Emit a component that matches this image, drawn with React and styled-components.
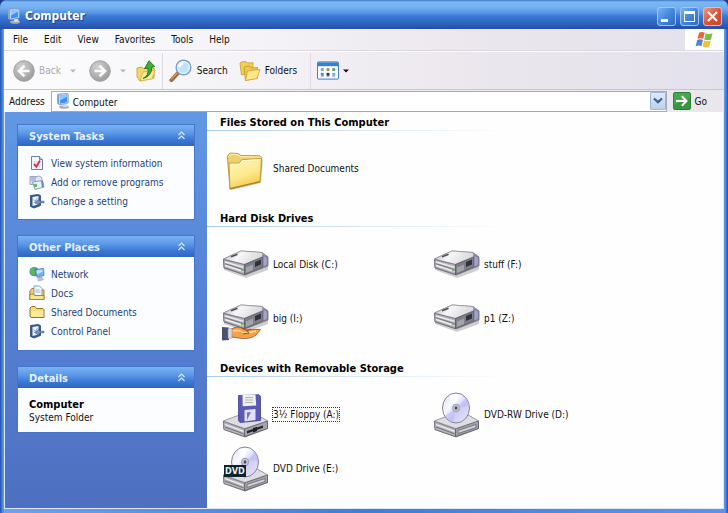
import React from "react";
import styled, { createGlobalStyle } from "styled-components";

const Global = createGlobalStyle`
  * { box-sizing: border-box; }
  body {
    margin: 0;
    background: #1d3c94;
    color: #111;
    font: 10px/13px "DejaVu Sans Condensed", "DejaVu Sans", sans-serif;
  }
  button, input { font: inherit; color: inherit; }
  h1, h2, h3, p, ul { margin: 0; padding: 0; }
`;

const Window = styled.div`
  display: flex;
  flex-direction: column;
  min-height: 100vh;
  padding: 0 4px 4px;
  border-radius: 7px 7px 0 0;
  background: linear-gradient(90deg, #2450ae 0, #3f7ddb 2px, #6ea2ec 4px, #3f7ddb 50%, #5c94e8 calc(100% - 3px), #2450ae 100%);
  overflow: hidden;
`;

const TitleBar = styled.header`
  display: flex;
  align-items: center;
  gap: 3px;
  height: 29px;
  margin: 0 -4px;
  padding: 3px 6px 0;
  background: linear-gradient(#3f78c8 0, #7db8f3 2px, #73aef0 8px, #5593e4 13px, #3b7bd6 16px, #3169c6 22px, #2850ab 28px);
`;

const Title = styled.h1`
  flex: 1;
  color: #fff;
  font: bold 12px/16px "DejaVu Sans Condensed", "DejaVu Sans", sans-serif;
  text-shadow: 1px 1px 1px #1c3f8a;
`;

const Captions = styled.div`
  display: flex;
  gap: 4px;
`;

const Caption = styled.button`
  display: flex;
  width: 19px;
  height: 19px;
  padding: 0;
  border: 1px solid ${(p) => (p.$close ? "#e9b9b8" : "#9cc6f5")};
  border-radius: 3px;
  background: ${(p) =>
    p.$close
      ? "linear-gradient(135deg, #ec9a80, #dc5638 50%, #c8432b)"
      : "linear-gradient(135deg, #79b2f0, #4587de 50%, #2f68c4)"};
`;

const MenuRow = styled.div`
  display: flex;
  height: 22px;
  background: linear-gradient(90deg, #fdfdfe, #f3f1f5 40%, #ebe7ed 65%, #e3e1ec);
  border-bottom: 1px solid #dad7df;
`;

const Menu = styled.nav`
  display: flex;
  flex: 1;
  padding-left: 1px;
`;

const MenuButton = styled.button`
  padding: 0 8px;
  border: 0;
  background: none;
`;

const FlagBox = styled.div`
  display: flex;
  justify-content: center;
  align-items: center;
  width: 39px;
  background: #fff;
`;

const Toolbar = styled.div`
  display: flex;
  align-items: center;
  height: 39px;
  padding-left: 9px;
  background: linear-gradient(90deg, #fcfcfd, #f3f1f5 40%, #ebe7ed 65%, #e3e1ec);
  border-top: 1px solid #fff;
  border-bottom: 1px solid #c9c5cd;
`;

const Tool = styled.button`
  display: flex;
  align-items: center;
  gap: 4px;
  height: 32px;
  padding: 0;
  margin-right: ${(p) => p.$after || 0}px;
  border: 0;
  background: none;
  color: ${(p) => (p.disabled ? "#a9a9ad" : "#111")};
`;

const Separator = styled.div`
  width: 1px;
  height: 36px;
  margin-right: 6px;
  background: #dcd9e0;
`;

const AddressBar = styled.div`
  display: flex;
  align-items: center;
  height: 22px;
  padding: 0 17px 0 5px;
  background: linear-gradient(90deg, #fcfcfd, #f3f1f5 40%, #e9e6ec);
`;

const AddressField = styled.div`
  display: flex;
  align-items: center;
  flex: 1;
  height: 21px;
  margin: 0 6px;
  padding: 0 0 0 3px;
  border: 1px solid #a5a9b5;
  background: #fff;
`;

const AddressInput = styled.input`
  flex: 1;
  min-width: 0;
  padding: 2px 0 0 2px;
  border: 0;
  outline: 0;
  background: none;
`;

const DropButton = styled.button`
  display: flex;
  align-items: center;
  justify-content: center;
  width: 16px;
  height: 18px;
  padding: 0;
  border: 1px solid #9fb8d8;
  border-radius: 1px;
  background: linear-gradient(#dfeafa, #b9d1f0);
`;

const Body = styled.div`
  display: flex;
  flex: 1;
  border: 1px solid #dbe8fb;
  border-width: 0 1px 1px;
  background: #fefefe;
`;

const Sidebar = styled.aside`
  display: flex;
  flex-direction: column;
  gap: 15px;
  width: 202px;
  padding: 12px 12px 13px;
  background: linear-gradient(#6198e4, #5580d4 50%, #4f6fc0);
`;

const Panel = styled.section`
  border: 1px solid #4475cc;
  background: #fcfdfe;
`;

const PanelHead = styled.div`
  display: flex;
  align-items: center;
  justify-content: space-between;
  height: 21px;
  padding: 2px 8px 0 11px;
  background: linear-gradient(#7bb3f2 0, #5b98e8 8px, #3d7bd7 14px, #2f66c2);
`;

const PanelTitle = styled.h2`
  color: #e6f0ff;
  font-size: 11px;
  line-height: 13px;
`;

const CollapseButton = styled.button`
  display: flex;
  padding: 0 0 2px;
  border: 0;
  background: none;
`;

const Links = styled.ul`
  display: grid;
  gap: 3px;
  padding: 9px 11px ${(p) => p.$bottom}px;
  list-style: none;
`;

const TaskLink = styled.a`
  display: flex;
  align-items: center;
  gap: 6px;
  height: 16px;
  color: #1f3f7d;
  text-decoration: none;
`;

const Details = styled.div`
  padding: 10px 11px 8px;
  line-height: 13px;
`;

const DetailsName = styled.p`
  color: #000;
  font-size: 11px;
  font-weight: bold;
`;

const Content = styled.main`
  display: flex;
  flex-direction: column;
  gap: 20px;
  flex: 1;
  min-width: 0;
  padding-top: 4px;
`;

const GroupTitle = styled.h3`
  padding: 0 0 1px 13px;
  color: #000;
  font-size: 11px;
  line-height: 13px;
`;

const Rule = styled.div`
  width: 300px;
  max-width: 100%;
  height: 1px;
  background: linear-gradient(90deg, #a9cdec, #d8e8f5 50%, #fefefe);
`;

const Items = styled.div`
  display: grid;
  grid-template-columns: repeat(auto-fill, 211px);
  row-gap: 6px;
  padding: 13px 0 0 15px;
`;

const Item = styled.button`
  display: flex;
  align-items: center;
  gap: 3px;
  height: 48px;
  padding: 0;
  border: 0;
  background: none;
  text-align: left;
`;

const ItemLabel = styled.span`
  outline: ${(p) => (p.$focused ? "1px dotted #333" : "0")};
`;

/* ---------- icons ---------- */

const MonitorIcon = () => (
  <svg width="16" height="16" viewBox="0 0 16 16">
    <ellipse cx="9" cy="14" rx="5" ry="1.8" fill="#a9adb8" />
    <path d="M8 11l4 0 1 2.4-5 .6z" fill="#d9dbe2" />
    <path d="M2 1.5L4 1v11l-2-1.4z" fill="#9ba6bd" />
    <path d="M3.5 1L12 .5q1.300 0 1.300 1.200V10L5 11.800q-1.500-.4-1.500-1.800z" fill="#b9d7fb" stroke="#6f91cb" strokeWidth=".7" />
    <path d="M5 2.200l7-.5v7.500l-7 1.200z" fill="#3f8ff0" />
    <path d="M5 2.200l7-.5v2L5 7.500z" fill="#8fc6fd" />
  </svg>
);

const NavCircle = ({ back }) => (
  <svg width="22" height="22" viewBox="0 0 22 22">
    <defs>
      <radialGradient id={back ? "navb" : "navf"} cx=".38" cy=".3" r=".8">
        <stop offset="0" stopColor="#d2d2d2" />
        <stop offset="1" stopColor="#969696" />
      </radialGradient>
    </defs>
    <circle cx="11" cy="11" r="10.300" fill={`url(#${back ? "navb" : "navf"})`} stroke="#a2a2a4" />
    <path
      d={back ? "M16.500 11H6.500M11.500 5.700L6 11l5.500 5.300" : "M5.500 11h10M10.500 5.700L16 11l-5.500 5.300"}
      fill="none"
      stroke="#fafafa"
      strokeWidth="2.600"
    />
  </svg>
);

const Caret = ({ color = "#111" }) => (
  <svg width="6" height="4" viewBox="0 0 6 4">
    <path d="M0 .5h6L3 3.500z" fill={color} />
  </svg>
);

const UpIcon = () => (
  <svg width="20" height="22" viewBox="0 0 20 22">
    <path d="M1 8l5-1 1.500 1.500L18 8v10L4 21 1 17z" fill="#f4d867" stroke="#c79a2e" strokeWidth=".8" />
    <path d="M4 21l3-9 12-2-3 9z" fill="#fbeb93" stroke="#d0a83c" strokeWidth=".7" />
    <path d="M7 18.500q6-2.500 5-10.500l-3.500.7L13 .8l5.800 5.700-3 .7Q16 16 7 18.500z" fill="#3fae35" stroke="#1d7422" strokeWidth=".9" />
  </svg>
);

const SearchIcon = () => (
  <svg width="24" height="24" viewBox="0 0 24 24">
    <path d="M8.500 14.500l-6 6.500" stroke="#94633f" strokeWidth="4" strokeLinecap="round" />
    <path d="M8 14.200L2.500 20" stroke="#d59a68" strokeWidth="1.500" strokeLinecap="round" />
    <circle cx="14.500" cy="8.500" r="7.300" fill="#cdeafd" stroke="#7ba1c8" strokeWidth="1.500" />
    <circle cx="14.500" cy="8.500" r="5.900" fill="#bfe3fc" stroke="#fff" strokeWidth=".8" />
    <path d="M10.500 8q.5-3.500 4-4" fill="none" stroke="#fff" strokeWidth="2" />
  </svg>
);

const FoldersIcon = () => (
  <svg width="22" height="22" viewBox="0 0 22 22">
    <path d="M1 3.500L2 2l5-.5L8.500 3 14 2.700V12L2.500 15z" fill="#f2cf57" stroke="#c69d35" strokeWidth=".8" />
    <path d="M5 8l1-1.500 5-.5L12.500 8l6-.5V18L6.500 20.500z" fill="#eec74d" stroke="#c1952d" strokeWidth=".8" />
    <path d="M6.500 20.500L8.500 11l12.500-1.500L18 18.500z" fill="#fce98c" stroke="#cda238" strokeWidth=".8" />
  </svg>
);

const ViewsIcon = () => (
  <svg width="22" height="19" viewBox="0 0 23 19">
    <rect x=".5" y=".5" width="22" height="18" rx="1" fill="#f8fbff" stroke="#3d78b8" />
    <path d="M1 1h21v4H1z" fill="#3482ce" />
    <path d="M4 7h3v3H4zM16 12h3v3h-3z" fill="#7aa7d7" />
    <path d="M10 7h3v3h-3z" fill="#a88f55" />
    <path d="M16 7h3v3h-3z" fill="#60a26b" />
    <path d="M4 12h3v3H4z" fill="#538bbb" />
    <path d="M10 12h3v3h-3z" fill="#282f67" />
    <path d="M4 16h3M10 16h3M16 16h3" stroke="#9ca8b6" />
  </svg>
);

const FlagIcon = () => (
  <svg width="19" height="18" viewBox="0 0 19 18">
    <path d="M4 1.800Q7 .2 9.700 1.800L8.200 8Q5.500 6.500 2.500 8z" fill="#e8683a" />
    <path d="M10.600 2.200q3 1.600 6.900.1L16 8.400q-3.700 1.500-6.800 0z" fill="#7fbd42" />
    <path d="M2.200 9Q5 7.500 8 9l-1.500 6.200Q4 13.600.6 15.200z" fill="#4c86d9" />
    <path d="M9 9.400q3 1.500 6.800 0l-1.500 6.200q-3.600 1.600-6.800 0z" fill="#f5bf35" />
  </svg>
);

const ChevronIcon = () => (
  <svg width="10" height="8" viewBox="0 0 10 8">
    <path d="M1 1.500l4 3.600 4-3.600" fill="none" stroke="#466087" strokeWidth="2.300" />
  </svg>
);

const GoIcon = () => (
  <svg width="18" height="18" viewBox="0 0 18 18">
    <rect x=".5" y=".5" width="17" height="17" rx="1.500" fill="#36953f" stroke="#2a8237" />
    <path d="M1 1h16v5L1 13z" fill="#58b259" opacity=".6" />
    <path d="M3 9h10M8.800 4.300L13.500 9l-4.700 4.700" fill="none" stroke="#fff" strokeWidth="2" />
  </svg>
);

const CollapseIcon = () => (
  <svg width="9" height="9" viewBox="0 0 9 9">
    <path d="M1.500 4l3-3 3 3M1.500 8l3-3 3 3" fill="none" stroke="#d9e9ff" strokeWidth="1.200" />
  </svg>
);

const InfoIcon = () => (
  <svg width="16" height="16" viewBox="0 0 16 16">
    <path d="M2.500 1.500h8l3 3v10h-11z" fill="#f4f7ff" stroke="#6d7fae" />
    <path d="M10.500 1.500v3h3" fill="#c4d0ec" stroke="#6d7fae" />
    <path d="M4.500 6h7v6.500h-7z" fill="#f7d7e0" />
    <path d="M5 9l2.300 2.800L11 5.500" fill="none" stroke="#cf3050" strokeWidth="1.800" />
  </svg>
);

const ProgramsIcon = () => (
  <svg width="16" height="16" viewBox="0 0 16 16">
    <path d="M1 2.500h9v8H1z" fill="#d7deed" stroke="#8494b8" strokeWidth=".8" />
    <path d="M2 4h4M2 6h4" stroke="#8a9cc7" />
    <circle cx="9.500" cy="5.500" r="3.500" fill="#dce8f7" stroke="#8da1c4" strokeWidth=".8" />
    <path d="M3.500 8l10-1.500 1.500 6.500-9 2.500z" fill="#e9eff8" stroke="#7589b2" strokeWidth=".8" />
    <path d="M12 7l1.800-.3L15 13l-2 .6z" fill="#7286bc" />
    <circle cx="6.500" cy="11.500" r="1.700" fill="#5db652" />
  </svg>
);

const SettingIcon = () => (
  <svg width="16" height="16" viewBox="0 0 16 16">
    <path d="M1.500 2.500l7.500-1 2.500 1v10L5 15l-3.500-1.500z" fill="#34598e" stroke="#2c4674" strokeWidth=".8" />
    <path d="M3.500 4l6-1v8.500l-6 1.500z" fill="#edf4ff" />
    <path d="M5.500 9.500l4-3 1.500 1.700h4v1.600h-4L9.500 12z" fill="#7492be" stroke="#3f5b87" strokeWidth=".6" />
    <path d="M4.500 6.500l1.500 2 2.500-3.500" stroke="#99b0d0" fill="none" />
  </svg>
);

const NetworkIcon = () => (
  <svg width="16" height="16" viewBox="0 0 17 16">
    <circle cx="5.500" cy="5.500" r="5" fill="#3f88d2" />
    <path d="M1 4q2-4 6-3L5.500 4l2 2L5 10Q1 9 1 4z" fill="#5fb84d" />
    <path d="M7 3.500L15.500 2l.5 7.500-7.500 2z" fill="#71b4f5" stroke="#5278b5" strokeWidth=".8" />
    <path d="M8 4.300l6.500-1.100v2.500L8.500 8.200z" fill="#c3e3ff" />
    <path d="M10.500 11.500l3-.8.5 2 1.500 1.300-5 1.300-1.300-.8z" fill="#bfc6d5" stroke="#7986a0" strokeWidth=".5" />
  </svg>
);

const DocsIcon = () => (
  <svg width="16" height="16" viewBox="0 0 16 16">
    <path d="M.8 6l2-2.500h3L7 5h8v9.500H.8z" fill="#f1cd5c" stroke="#9b7c35" strokeWidth=".9" />
    <path d="M5 1h5.500L13 3.500V11H5z" fill="#f2f8ff" stroke="#708bb8" strokeWidth=".8" />
    <path d="M6.500 5h4M6.500 7h5" stroke="#9ab5db" />
    <path d="M.8 14.500V9.500L4 9l1.500 1.500H15v4z" fill="#fae58d" stroke="#9b7c35" strokeWidth=".9" />
  </svg>
);

const FolderIcon = () => (
  <svg width="16" height="16" viewBox="0 0 16 16">
    <path d="M1 4l1.500-1.500H6L7.500 4.500H14l1 1v8H2L1 12z" fill="#f7da70" stroke="#8f7433" />
    <path d="M2 7h12.300v5.800H2.500z" fill="#fdea9a" />
  </svg>
);

const BigFolderIcon = () => (
  <svg width="48" height="48" viewBox="0 0 48 48">
    <defs>
      <linearGradient id="bigfolder" x1=".2" y1="0" x2=".6" y2="1">
        <stop offset="0" stopColor="#fff5b0" />
        <stop offset=".55" stopColor="#fdea8e" />
        <stop offset="1" stopColor="#f3c53f" />
      </linearGradient>
    </defs>
    <path d="M39.500 15l1.500 1-2 23L10 46l-2-1z" fill="#b9b4a4" opacity=".6" />
    <path d="M5.300 12L8 9l8.300.5 2.700 2 19 .2 1.800 1.800L38 38 8 45z" fill="#efd06a" stroke="#b99440" strokeWidth=".9" />
    <path d="M6.300 12.800L8.500 10.200l7.500.5 2.700 2 19.300.3" fill="none" stroke="#fff3b4" />
    <path d="M7 19.200h10l3-3.500 19.500-1.200L38 38 8 45z" fill="url(#bigfolder)" stroke="#bf9638" strokeWidth=".9" />
    <path d="M8 20.200h9.500l3-3.500 17.800-1.100" fill="none" stroke="#fffbd8" />
    <path d="M8 44.600l29.800-7" stroke="#a97e2a" strokeWidth="1.200" />
  </svg>
);

const DriveShape = ({ id }) => (
  <g>
    <defs>
      <linearGradient id={id} x1="0" y1="0" x2="1" y2=".3">
        <stop offset="0" stopColor="#b4b4ba" />
        <stop offset=".45" stopColor="#f6f6f8" />
        <stop offset="1" stopColor="#d9d9de" />
      </linearGradient>
    </defs>
    <path d="M2 25l20 9 24-8v4l-22 8L2 30z" fill="#77777f" opacity=".35" />
    <path d="M1.500 19L19 11l21 1.500 6 4.500v9L23 35 2 28z" fill="#a5a5ac" stroke="#76767e" strokeWidth=".8" />
    <path d="M1.500 19L19 11l21 1.500 1 4-19 8z" fill={`url(#${id})`} stroke="#8a8a90" strokeWidth=".6" />
    <path d="M1.500 19.500l21 5v10L2 27.500z" fill="#b3b3b9" stroke="#66666e" strokeWidth=".7" />
    <path d="M3 22l18.500 5.300M3 25.500l18.500 6" stroke="#eeeef1" strokeWidth="1.400" />
    <path d="M3 23.700l18.500 6" stroke="#66666e" strokeWidth=".8" />
    <path d="M22.500 24.500L41 17v10l-18.500 7.500z" fill="#7d7e87" stroke="#55555d" strokeWidth=".7" />
    <path d="M24 27.500l7-3V30l-7 3z" fill="#a2a3ab" />
    <path d="M33 22l6-2.500v5L33 27z" fill="#30303c" />
    <path d="M41 15.500l4 1q1.500 4.500 0 9l-4 1.500z" fill="#a3a3c8" stroke="#66668c" strokeWidth=".7" />
    <path d="M9 16.800l6.500-2.500" stroke="#4b4b53" strokeWidth="1.500" />
    <path d="M19 31l2.500-.5" stroke="#4fa256" />
  </g>
);

const HardDiskIcon = ({ id }) => (
  <svg width="48" height="48" viewBox="0 0 48 48">
    <DriveShape id={id} />
  </svg>
);

const SharedDriveIcon = ({ id }) => (
  <svg width="48" height="48" viewBox="0 0 48 48">
    <DriveShape id={id} />
    <path d="M9 35q5-3 10-1.500l6 2.500q5-1 13.500-.5l-4.500 5.500q-5 4-13.500 3.500L9 43z" fill="#f6a04a" stroke="#9a5423" strokeWidth=".8" />
    <path d="M11 37q6-1.500 10 1.500 7 1 13-1.500" fill="none" stroke="#ffd795" strokeWidth="1.500" />
    <path d="M19 34l6 2.500 4-1.500M21 40l6-1M25 36.500l2 3" fill="none" stroke="#a84c18" />
    <path d="M0 33l7 .5V46L0 46.500z" fill="#4d506e" />
    <path d="M6 34.500l4 .2v9.300l-4 .5z" fill="#d5d7e2" stroke="#888da6" strokeWidth=".5" />
  </svg>
);

const BaseShape = () => (
  <g>
    <path d="M1.500 31L15 26l20-1 10.500 6v7.500L23 47 2 39.500z" fill="#c5c5ca" stroke="#67676e" strokeWidth=".8" />
    <path d="M1.500 31L15 26l20-1 10.500 6L23 38.500z" fill="#dedee2" stroke="#97979d" strokeWidth=".6" />
    <path d="M1.500 31.500L22.500 39v7.500L2 39.500z" fill="#b5b5bb" stroke="#5c5c63" strokeWidth=".6" />
    <path d="M3 34.500l18.500 6.800" stroke="#f2f2f4" strokeWidth="1.300" />
    <path d="M3 37l18.500 6.800" stroke="#6a6a72" strokeWidth=".9" />
    <path d="M22.500 39l23-8v7.500l-23 8z" fill="#a3a3aa" stroke="#55555c" strokeWidth=".7" />
  </g>
);

const FloppyIcon = () => (
  <svg width="48" height="48" viewBox="0 0 48 48">
    <BaseShape />
    <path d="M25 41l16-5.500v2.200L25 43.400z" fill="#24242c" />
    <path d="M31 38l4-1v4l-4 1.500z" fill="#1c1c24" />
    <path d="M16.500 5.500l20.500-.8 1.500 1.800v24L18 32.500l-1.500-2z" fill="#5a5ab4" stroke="#3f3f8d" strokeWidth=".8" />
    <path d="M20.500 4.500h13l.7 11-13.500.8z" fill="#f0f0ee" />
    <path d="M23 7.500h8M23 10h8M23 12.500h8" stroke="#b3b3a9" />
    <path d="M22.500 20l11-1v11l-11 1.500z" fill="#dfe0f2" />
    <path d="M25 22.500l4-.5-4 8z" fill="#7171bd" />
  </svg>
);

const Disc = ({ cx, cy, id }) => (
  <g>
    <defs>
      <linearGradient id={id} x1="0" y1="0" x2="1" y2="1">
        <stop offset="0" stopColor="#dcdcee" />
        <stop offset=".35" stopColor="#f9f9ff" />
        <stop offset=".6" stopColor="#cfcdf6" />
        <stop offset="1" stopColor="#e9e9f8" />
      </linearGradient>
    </defs>
    <ellipse cx={cx} cy={cy} rx="13.500" ry="15" fill={`url(#${id})`} stroke="#77778b" strokeWidth=".9" />
    <path d={`M${cx} ${cy}l-11 8q4 6 8 6.500zM${cx} ${cy}l10-10q3 4 3.200 8z`} fill="#b9b5f3" opacity=".55" />
    <path d={`M${cx} ${cy}l-7-12q4-2.500 8-2z`} fill="#fff" opacity=".8" />
    <ellipse cx={cx} cy={cy} rx="3.500" ry="3.900" fill="#c9c9d8" stroke="#8c8c9e" strokeWidth=".8" />
    <ellipse cx={cx} cy={cy} rx="1.400" ry="1.700" fill="#4a4a55" />
  </g>
);

const DvdRwIcon = ({ id }) => (
  <svg width="48" height="48" viewBox="0 0 48 48">
    <BaseShape />
    <path d="M25 40.500l18-6v3l-18 6z" fill="#d2d2d8" stroke="#5c5c66" strokeWidth=".7" />
    <Disc cx={23} cy={18} id={id} />
  </svg>
);

const DvdLabel = styled.text`
  font: bold 9px "DejaVu Sans Condensed", sans-serif;
  fill: #e4f2f4;
`;

const DvdIcon = ({ id }) => (
  <svg width="48" height="48" viewBox="0 0 48 48">
    <BaseShape />
    <path d="M25 40.500l18-6v3l-18 6z" fill="#d2d2d8" stroke="#5c5c66" strokeWidth=".7" />
    <Disc cx={23} cy={18} id={id} />
    <rect x="2" y="21" width="22" height="12" fill="#10222b" />
    <DvdLabel x="3" y="30">DVD</DvdLabel>
  </svg>
);

/* ---------- page ---------- */

const menus = ["File", "Edit", "View", "Favorites", "Tools", "Help"];

const panels = [
  {
    title: "System Tasks",
    bottom: 10,
    links: [
      ["View system information", InfoIcon],
      ["Add or remove programs", ProgramsIcon],
      ["Change a setting", SettingIcon],
    ],
  },
  {
    title: "Other Places",
    bottom: 11,
    links: [
      ["Network", NetworkIcon],
      ["Docs", DocsIcon],
      ["Shared Documents", FolderIcon],
      ["Control Panel", SettingIcon],
    ],
  },
];

const groups = [
  {
    title: "Files Stored on This Computer",
    items: [{ id: "shared", text: "Shared Documents", Icon: BigFolderIcon }],
  },
  {
    title: "Hard Disk Drives",
    items: [
      { id: "c", text: "Local Disk (C:)", Icon: HardDiskIcon },
      { id: "f", text: "stuff (F:)", Icon: HardDiskIcon },
      { id: "i", text: "big (I:)", Icon: SharedDriveIcon },
      { id: "z", text: "p1 (Z:)", Icon: HardDiskIcon },
    ],
  },
  {
    title: "Devices with Removable Storage",
    items: [
      { id: "a", text: "3½ Floppy (A:)", Icon: FloppyIcon, focused: true },
      { id: "d", text: "DVD-RW Drive (D:)", Icon: DvdRwIcon },
      { id: "e", text: "DVD Drive (E:)", Icon: DvdIcon },
    ],
  },
];

const PanelHeader = ({ title }) => (
  <PanelHead>
    <PanelTitle>{title}</PanelTitle>
    <CollapseButton aria-label={`Collapse ${title}`}>
      <CollapseIcon />
    </CollapseButton>
  </PanelHead>
);

export default function App() {
  return (
    <>
      <Global />
      <Window>
        <TitleBar>
          <MonitorIcon />
          <Title>Computer</Title>
          <Captions>
            <Caption aria-label="Minimize">
              <svg width="17" height="17" viewBox="0 0 17 17"><path d="M3 11h7v3H3z" fill="#fff" /></svg>
            </Caption>
            <Caption aria-label="Maximize">
              <svg width="17" height="17" viewBox="0 0 17 17"><path d="M3 3h11v11H3zM4 6v7h9V6z" fillRule="evenodd" fill="#fff" /></svg>
            </Caption>
            <Caption $close aria-label="Close">
              <svg width="17" height="17" viewBox="0 0 17 17"><path d="M4 4l9 9M13 4l-9 9" stroke="#fff" strokeWidth="2.200" /></svg>
            </Caption>
          </Captions>
        </TitleBar>
        <MenuRow>
          <Menu>
            {menus.map((m) => (
              <MenuButton key={m}>{m}</MenuButton>
            ))}
          </Menu>
          <FlagBox>
            <FlagIcon />
          </FlagBox>
        </MenuRow>
        <Toolbar>
          <Tool disabled $after={9}><NavCircle back />Back</Tool>
          <Tool disabled $after={13} aria-label="Back history"><Caret color="#b5b5b8" /></Tool>
          <Tool disabled $after={9} aria-label="Forward"><NavCircle /></Tool>
          <Tool disabled $after={10} aria-label="Forward history"><Caret color="#b5b5b8" /></Tool>
          <Tool $after={6} aria-label="Up"><UpIcon /></Tool>
          <Separator />
          <Tool $after={11}><SearchIcon />Search</Tool>
          <Tool $after={13}><FoldersIcon />Folders</Tool>
          <Separator />
          <Tool aria-label="Views"><ViewsIcon /><Caret /></Tool>
        </Toolbar>
        <AddressBar>
          <label htmlFor="address">Address</label>
          <AddressField>
            <MonitorIcon />
            <AddressInput id="address" defaultValue="Computer" />
            <DropButton aria-label="Show addresses"><ChevronIcon /></DropButton>
          </AddressField>
          <Tool><GoIcon />Go</Tool>
        </AddressBar>
        <Body>
          <Sidebar>
            {panels.map((p) => (
              <Panel key={p.title}>
                <PanelHeader title={p.title} />
                <Links $bottom={p.bottom}>
                  {p.links.map(([text, Icon]) => (
                    <li key={text}>
                      <TaskLink href="#"><Icon />{text}</TaskLink>
                    </li>
                  ))}
                </Links>
              </Panel>
            ))}
            <Panel>
              <PanelHeader title="Details" />
              <Details>
                <DetailsName>Computer</DetailsName>
                <p>System Folder</p>
              </Details>
            </Panel>
          </Sidebar>
          <Content>
            {groups.map((g) => (
              <section key={g.title}>
                <GroupTitle>{g.title}</GroupTitle>
                <Rule />
                <Items>
                  {g.items.map(({ id, text, Icon, focused }) => (
                    <Item key={id}>
                      <Icon id={`icon-${id}`} />
                      <ItemLabel $focused={focused}>{text}</ItemLabel>
                    </Item>
                  ))}
                </Items>
              </section>
            ))}
          </Content>
        </Body>
      </Window>
    </>
  );
}
